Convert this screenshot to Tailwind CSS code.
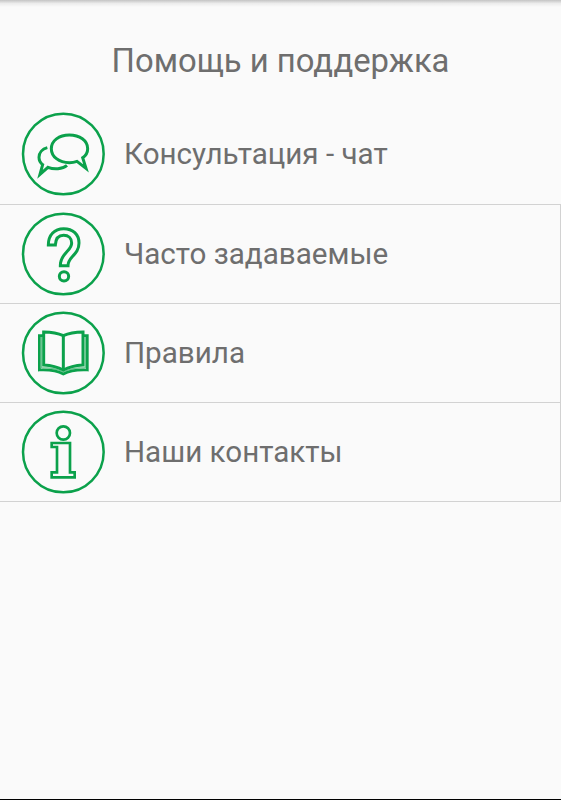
<!DOCTYPE html>
<html lang="ru">
<head>
<meta charset="utf-8">
<title>Помощь и поддержка</title>
<script src="https://cdn.jsdelivr.net/npm/@tailwindcss/browser@4"></script>
</head>
<body class="bg-[#fafafa]">
<main class="flex h-[800px] w-[561px] flex-col overflow-hidden border-b border-black bg-[#fafafa] font-[Roboto,sans-serif] text-[#6e6e6e]">
  <div class="h-[7px] shrink-0 bg-linear-to-b from-[#c4c4c4] via-[#ececec] to-[#fafafa]"></div>
  <h1 class="flex h-[97px] shrink-0 items-center justify-center pt-[12px] text-[32.8px] leading-none"><span>Помощь и поддержка</span></h1>
  <ul>
    <li class="flex h-[100px] items-center pl-[10px]">
      <svg class="h-[100px] w-[110px] shrink-0" viewBox="0 0 330 300" fill="none" stroke="#0ba14b" stroke-width="9">
        <circle cx="160" cy="150" r="121" stroke-width="7.5"/>
        <path d="M201 172Q190 176 178 176C147 176 124 158 124 134S147 93 178 93S233 110 233 134C233 145 227 155 218 161L228 193Z"/>
        <path d="M112 131C96 135 87 147 87 160C87 169 91 177 98 182L90 211L114 190C132 197 157 196 171 184"/>
      </svg>
      <span class="pl-[4px] text-[29.6px]">Консультация - чат</span>
    </li>
    <li class="flex h-[99px] items-center border-t border-r border-[#d2d2d2] pl-[10px]">
      <svg class="h-[98px] w-[110px] shrink-0" viewBox="0 3 330 294" fill="none" stroke="#0ba14b" stroke-width="9">
        <circle cx="160" cy="150" r="121" stroke-width="7.5"/>
        <path d="M115 123C115 92 134 74 161 74C189 74 207 92 207 117C207 137 197 147 186 159C178 168 174 174 174 185H151C151 166 158 157 168 146C178 135 185 130 185 117C185 103 175 94 161 94C145 94 137 105 136 123Z"/>
        <circle cx="162" cy="217" r="14"/>
      </svg>
      <span class="pl-[4px] text-[29.6px]">Часто задаваемые</span>
    </li>
    <li class="flex h-[99px] items-center border-t border-r border-[#d2d2d2] pl-[10px]">
      <svg class="h-[98px] w-[110px] shrink-0" viewBox="0 3 330 294" fill="none" stroke="#0ba14b" stroke-width="9">
        <circle cx="160" cy="150" r="121" stroke-width="7.5"/>
        <path d="M160 98Q137 87 101 87V186Q136 188 160 201Q184 188 219 186V87Q183 87 160 98Z"/>
        <path d="M160 98V201"/>
        <path d="M99 98H88V201Q135 199 160 213Q185 199 232 201V98H221" stroke-width="8"/>
        <path d="M94 101V194Q136 194 160 207Q184 194 226 194V101" stroke-width="4" opacity=".6"/>
      </svg>
      <span class="pl-[4px] text-[29.6px]">Правила</span>
    </li>
    <li class="flex h-[100px] items-center border-y border-r border-[#d2d2d2] pl-[10px]">
      <svg class="h-[98px] w-[110px] shrink-0" viewBox="0 3 330 294" fill="none" stroke="#0ba14b" stroke-width="8">
        <circle cx="160" cy="150" r="121" stroke-width="7.5"/>
        <circle cx="160" cy="93" r="20"/>
        <path d="M125 123H180V211H194V226H125V211H141V135H125Z"/>
      </svg>
      <span class="pl-[4px] text-[29.6px]">Наши контакты</span>
    </li>
  </ul>
</main>
</body>
</html>
